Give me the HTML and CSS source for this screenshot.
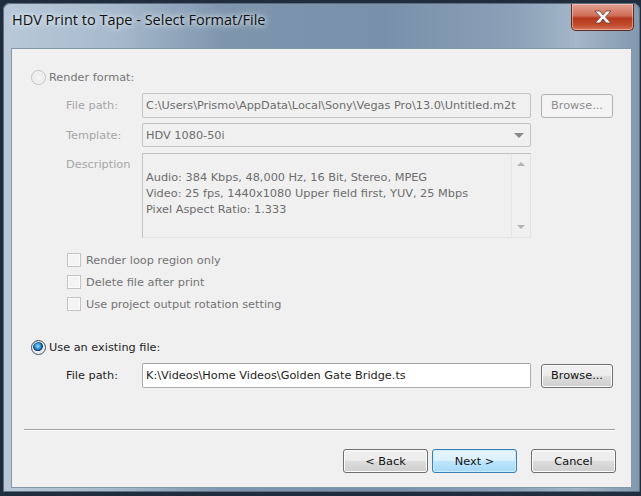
FILE: index.html
```html
<!DOCTYPE html>
<html>
<head>
  <meta charset="UTF-8">
  <title>HDV Print to Tape - Select Format/File</title>
  <link rel="stylesheet" href="styles.css">
</head>
<body>
  <div class="window">
    <div class="titlebar">
      <span class="title">HDV Print to Tape - Select Format/File</span>
      <div class="close-btn">
        <svg width="22" height="14" viewBox="0 0 22 14">
          <path d="M3 1 L8 1 L11 5 L14 1 L19 1 L13.5 7 L19 13 L14 13 L11 9 L8 13 L3 13 L8.5 7 Z" fill="#f4f4f4" stroke="#6a3a30" stroke-width="0.8"/>
        </svg>
      </div>
    </div>

    <div class="client">
      <div class="option disabled">
        <span class="radio"></span>
        <span>Render format:</span>
      </div>

      <div class="fields">
        <div class="row">
          <span class="label">File path:</span>
          <div class="input disabled">C:\Users\Prismo\AppData\Local\Sony\Vegas Pro\13.0\Untitled.m2t</div>
          <div class="btn btn-disabled browse">Browse...</div>
        </div>
        <div class="row">
          <span class="label">Template:</span>
          <div class="input select disabled">
            <span>HDV 1080-50i</span>
            <span class="arrow-down"></span>
          </div>
        </div>
        <div class="row row-top">
          <span class="label">Description</span>
          <div class="textbox">
            <div class="textbox-text">
              Audio: 384 Kbps, 48,000 Hz, 16 Bit, Stereo, MPEG<br>
              Video: 25 fps, 1440x1080 Upper field first, YUV, 25 Mbps<br>
              Pixel Aspect Ratio: 1.333
            </div>
            <div class="scrollbar">
              <span class="arrow-up small"></span>
              <span class="arrow-down small"></span>
            </div>
          </div>
        </div>
      </div>

      <div class="checks">
        <div class="check"><span class="box"></span>Render loop region only</div>
        <div class="check"><span class="box"></span>Delete file after print</div>
        <div class="check"><span class="box"></span>Use project output rotation setting</div>
      </div>

      <div class="option second">
        <span class="radio checked"></span>
        <span>Use an existing file:</span>
      </div>

      <div class="fields">
        <div class="row">
          <span class="label active">File path:</span>
          <div class="input">K:\Videos\Home Videos\Golden Gate Bridge.ts</div>
          <div class="btn browse">Browse...</div>
        </div>
      </div>

      <div class="separator"></div>

      <div class="buttons">
        <div class="btn nav">&lt; Back</div>
        <div class="btn nav default">Next &gt;</div>
        <div class="btn nav cancel">Cancel</div>
      </div>
    </div>
  </div>
</body>
</html>
```

FILE: styles.css
```css
body {
  margin: 0;
  background: #1f2d3e;
  font-family: "DejaVu Sans", Verdana, sans-serif;
  font-size: 11.3px;
  color: #1e1e1e;
  width: 641px;
  height: 496px;
  overflow: hidden;
}
.window {
  margin: 3px 1px 0 3px;
  width: 637px;
  height: 489px;
  border-radius: 7px 7px 2px 2px;
  background: linear-gradient(90deg, #b9c9d9 0%, #a6b9cc 18%, #7d95ad 35%, #7890a9 60%, #8aa1b8 80%, #a4b6c8 90%, #8298ae 100%);
  box-shadow: inset 0 0 0 1px #5f6f80;
  display: flex;
  flex-direction: column;
}
.titlebar {
  height: 42px;
  display: flex;
  align-items: flex-start;
  justify-content: space-between;
}
.title {
  font-family: "Open Sans", "Noto Sans", sans-serif;
  font-size: 14.5px;
  color: #111;
  margin: 7px 0 0 9px;
  text-shadow: 0 0 8px #e6eef6, 0 0 4px #e6eef6;
}
.close-btn {
  width: 61px;
  height: 26px;
  margin: 1px 6px 0 0;
  border: 1px solid #5d2b22;
  border-top: none;
  border-radius: 0 0 5px 5px;
  background: linear-gradient(180deg, #e3a192 0%, #cf6d57 45%, #b6381d 55%, #c04b2b 80%, #d4735a 100%);
  display: flex;
  align-items: center;
  justify-content: center;
  box-shadow: inset 0 0 0 1px rgba(255, 220, 210, 0.5);
}
.client {
  margin: 3px 8px 0 8px;
  height: 438px;
  background: #f0f0f0;
  border: 1px solid #8396aa;
  display: flex;
  flex-direction: column;
}
.option {
  display: flex;
  align-items: center;
  gap: 3px;
  margin: 20px 0 0 19px;
  height: 16px;
}
.option.disabled {
  color: #767676;
}
.option.second {
  margin-top: 28px;
}
.radio {
  width: 13px;
  height: 13px;
  border-radius: 50%;
  border: 1px solid #c2c2c2;
  background: radial-gradient(circle, #f7f7f7 0%, #e8e8e8 70%);
  box-shadow: inset 0 0 0 1px #f8f8f8;
}
.radio.checked {
  border-color: #3a4f63;
  background: radial-gradient(circle at 45% 40%, #9fdcfb 0%, #2c8fd0 28%, #0b3a6c 44%, #eaeaea 50%, #d7d7d7 100%);
}
.fields {
  display: flex;
  flex-direction: column;
  gap: 5px;
  margin: 8px 0 0 54px;
}
.row {
  display: flex;
  align-items: center;
}
.row-top {
  align-items: flex-start;
  margin-top: 1px;
}
.row-top .label {
  padding-top: 5px;
}
.label {
  width: 76px;
  color: #a6a6a6;
}
.label.active {
  color: #1e1e1e;
}
.input {
  width: 381px;
  height: 23px;
  border: 1px solid #abadb3;
  border-top-color: #a3a3a3;
  border-radius: 2px;
  background: #fff;
  padding: 0 3px;
  display: flex;
  align-items: center;
  white-space: nowrap;
  overflow: hidden;
}
.input.disabled {
  background: #f0f0f0;
  border-color: #c3c3c3;
  color: #6d6d6d;
}
.select {
  justify-content: space-between;
  height: 22px;
}
.arrow-down,
.arrow-up {
  width: 0;
  height: 0;
  border-left: 5px solid transparent;
  border-right: 5px solid transparent;
  margin-right: 3px;
}
.arrow-down {
  border-top: 5px solid #8a8a8a;
}
.arrow-up {
  border-bottom: 5px solid #8a8a8a;
}
.small {
  border-left-width: 4px;
  border-right-width: 4px;
  margin-right: 0;
}
.arrow-down.small {
  border-top: 4px solid #b3b3b3;
}
.arrow-up.small {
  border-bottom: 4px solid #b3b3b3;
}
.textbox {
  width: 387px;
  height: 83px;
  border: 1px solid #c3c3c3;
  border-right-color: #e3e3e3;
  border-bottom-color: #e3e3e3;
  display: flex;
  color: #6d6d6d;
}
.textbox-text {
  flex: 1;
  padding: 16px 0 0 3px;
  line-height: 16px;
  white-space: nowrap;
}
.scrollbar {
  width: 18px;
  border-left: 1px solid #e5e5e5;
  display: flex;
  flex-direction: column;
  align-items: center;
  justify-content: space-between;
  padding: 8px 0 8px 0;
}
.browse {
  width: 70px;
  margin-left: 10px;
}
.checks {
  display: flex;
  flex-direction: column;
  gap: 8px;
  margin: 15px 0 0 55px;
}
.check {
  display: flex;
  align-items: center;
  gap: 5px;
  color: #737373;
  height: 14px;
}
.box {
  width: 12px;
  height: 12px;
  border: 1px solid #c3c3c3;
  background: #f4f4f4;
  box-shadow: inset 0 0 0 1px #fbfbfb;
}
.btn {
  height: 22px;
  border: 1px solid #707070;
  border-radius: 3px;
  background: linear-gradient(180deg, #f2f2f2 0%, #ebebeb 50%, #dddddd 50%, #cfcfcf 100%);
  box-shadow: inset 0 0 0 1px #fcfcfc;
  display: flex;
  align-items: center;
  justify-content: center;
  color: #111;
}
.btn-disabled {
  background: #f4f4f4;
  border-color: #adb2b5;
  color: #8d8d8d;
  box-shadow: none;
}
.separator {
  margin: 41px 16px 0 12px;
  height: 1px;
  background: #a0a0a0;
  border-bottom: 1px solid #fff;
}
.buttons {
  display: flex;
  justify-content: flex-end;
  margin: 18px 15px 0 0;
}
.nav {
  width: 83px;
}
.default {
  margin-left: 4px;
  border-color: #3c7fb1;
  background: linear-gradient(180deg, #eaf6fd 0%, #d9f0fc 50%, #bee6fd 50%, #a7d9f5 100%);
  box-shadow: inset 0 0 0 1px #c9ecfd;
}
.cancel {
  margin-left: 14px;
}
```
